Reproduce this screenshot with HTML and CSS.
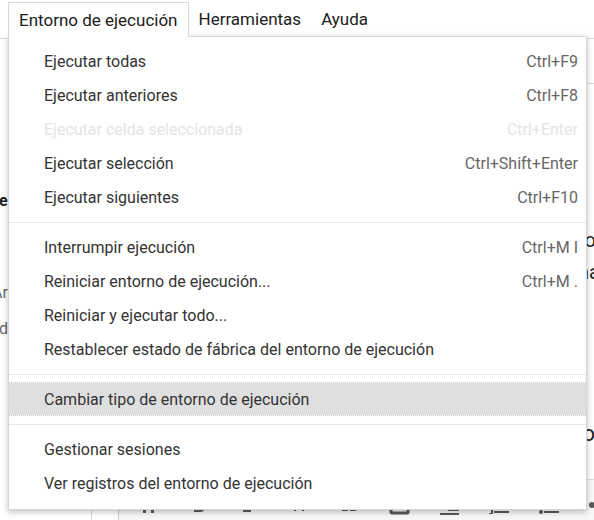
FILE: index.html
```html
<!DOCTYPE html>
<html lang="es">
<head>
<meta charset="utf-8">
<meta name="viewport" content="width=device-width, initial-scale=1">
<title>Entorno de ejecución</title>
<link rel="stylesheet" href="styles.css">
</head>
<body>
<header class="menubar">
  <div class="menu-host">
    <button class="tab tab-open" type="button" aria-haspopup="menu" aria-expanded="true">Entorno de ejecución</button>
  </div>
  <button class="tab" type="button">Herramientas</button>
  <button class="tab" type="button">Ayuda</button>
</header>
<div class="menu" role="menu">
  <button class="item" role="menuitem" type="button"><span>Ejecutar todas</span><kbd>Ctrl+F9</kbd></button>
  <button class="item" role="menuitem" type="button"><span>Ejecutar anteriores</span><kbd>Ctrl+F8</kbd></button>
  <button class="item" role="menuitem" type="button" disabled><span>Ejecutar celda seleccionada</span><kbd>Ctrl+Enter</kbd></button>
  <button class="item" role="menuitem" type="button"><span>Ejecutar selección</span><kbd>Ctrl+Shift+Enter</kbd></button>
  <button class="item" role="menuitem" type="button"><span>Ejecutar siguientes</span><kbd>Ctrl+F10</kbd></button>
  <hr class="separator">
  <button class="item" role="menuitem" type="button"><span>Interrumpir ejecución</span><kbd>Ctrl+M I</kbd></button>
  <button class="item" role="menuitem" type="button"><span>Reiniciar entorno de ejecución...</span><kbd>Ctrl+M .</kbd></button>
  <button class="item" role="menuitem" type="button"><span>Reiniciar y ejecutar todo...</span></button>
  <button class="item" role="menuitem" type="button"><span>Restablecer estado de fábrica del entorno de ejecución</span></button>
  <hr class="separator">
  <button class="item item-active" role="menuitem" type="button"><span>Cambiar tipo de entorno de ejecución</span></button>
  <hr class="separator">
  <button class="item" role="menuitem" type="button"><span>Gestionar sesiones</span></button>
  <button class="item" role="menuitem" type="button"><span>Ver registros del entorno de ejecución</span></button>
</div>
<div class="workspace">
  <aside class="sidebar">
    <strong class="side-title">e</strong>
    <span class="side-link side-cut">Ar</span>
    <span class="side-link">d</span>
  </aside>
  <main class="notebook">
    <div class="notebook-bar"></div>
    <div class="prose">
      <p class="line">o</p>
      <p class="line line-cut">na</p>
      <h2 class="heading">o</h2>
    </div>
    <div class="editor">
      <svg class="tools" width="476" height="42" viewBox="118 479 476 42" aria-hidden="true">
        <g fill="#5a5a5a">
          <path d="M143 504h3v9h-3zM151 504h3v9h-3z"/>
          <path d="M194 500h6q5 0 5 6t-5 6h-6z"/>
          <path d="M243 509h8v3h-8z"/>
          <path d="M294 507l3 0-1 4h-2zM302 507h2v4h-2z"/>
          <path d="M342 509h6v2h-6zM350 509h6v2h-6z"/>
          <path d="M448 509h11v2h-11zM440 513h19v2h-19z"/>
          <path d="M489 509h4v5h-4v-1h2v-3h-2zM494 511h15v2h-15z"/>
          <circle cx="541" cy="512" r="2"/><path d="M544 511h15v2h-15z"/>
          <circle cx="592" cy="505" r="3"/>
        </g>
        <rect x="391" y="500" width="17" height="13" rx="1" fill="none" stroke="#5a5a5a" stroke-width="3"/>
      </svg>
    </div>
  </main>
</div>
</body>
</html>
```
FILE: styles.css
```css
* { box-sizing: border-box; }

body {
  margin: 0;
  min-height: 100vh;
  display: flex;
  flex-direction: column;
  overflow: hidden;
  position: relative;
  background: #fff;
  color: #212121;
  font-family: Roboto, "Liberation Sans", sans-serif;
  font-size: 16px;
}

button {
  border: 0;
  background: none;
  font: inherit;
  color: inherit;
  text-align: left;
}

.menubar {
  display: flex;
  height: 39px;
  padding: 2px 0 0 8px;
  border-bottom: 1px solid #dadada;
}

.menu-host {
  position: relative;
  z-index: 2;
  height: 35px;
}

.tab {
  height: 34px;
  padding: 0 10px;
  font-size: 17px;
  line-height: 33px;
  white-space: nowrap;
}

.tab-open {
  height: 35px;
  border: 1px solid #dadada;
  border-bottom: 0;
  background: #fff;
}

.menu {
  position: absolute;
  z-index: 1;
  top: 36px;
  left: 8px;
  right: 7px;
  padding: 7px 0 9px;
  border: 1px solid #d6d6d6;
  background: #fff;
  box-shadow: 0 2px 6px rgba(0, 0, 0, 0.25);
}

.item {
  display: flex;
  align-items: center;
  justify-content: space-between;
  width: 100%;
  height: 34px;
  padding: 0 8px 0 35px;
  color: #333;
  white-space: nowrap;
}

.item kbd {
  font: inherit;
  color: #666;
}

.item:disabled,
.item:disabled kbd { color: #e4e4e4; }

.item-active {
  border: 1px dotted #ccc;
  border-width: 1px 0;
  background: #dfdfdf;
  background-clip: padding-box;
}

.separator {
  margin: 8px 0 7px;
  border: 0;
  border-top: 1px solid #e8e8e8;
}

.workspace {
  display: grid;
  grid-template-columns: 92px 1fr;
  flex: 1;
}

.sidebar {
  display: flex;
  flex-direction: column;
  padding-top: 144px;
  border-right: 1px solid #dadada;
}

.side-title {
  height: 92px;
  margin-left: -1px;
  line-height: 36px;
}

.side-link {
  margin-left: -1px;
  line-height: 36px;
  color: #666;
}

.side-cut { margin-left: -8px; }

.notebook {
  display: flex;
  flex-direction: column;
  min-width: 0;
}

.notebook-bar {
  height: 45px;
  border-bottom: 1px solid #dadada;
}

.prose {
  height: 395px;
  padding-top: 140px;
  overflow: hidden;
  text-align: right;
}

.line {
  margin: 0 -2px 0 0;
  font-size: 20px;
  line-height: 32px;
}

.line-cut { margin-right: -6px; }

.heading {
  margin: 128px -1px 0 0;
  font-size: 22px;
  font-weight: 400;
  line-height: 36px;
}

.editor {
  flex: 1;
  height: 42px;
  margin-left: 26px;
  overflow: hidden;
  border-top: 1px solid #e0e0e0;
  border-left: 1px solid #d0d0d0;
  background: #f7f7f7;
}

.tools {
  display: block;
  margin: -1px 0 0 -1px;
}
```
